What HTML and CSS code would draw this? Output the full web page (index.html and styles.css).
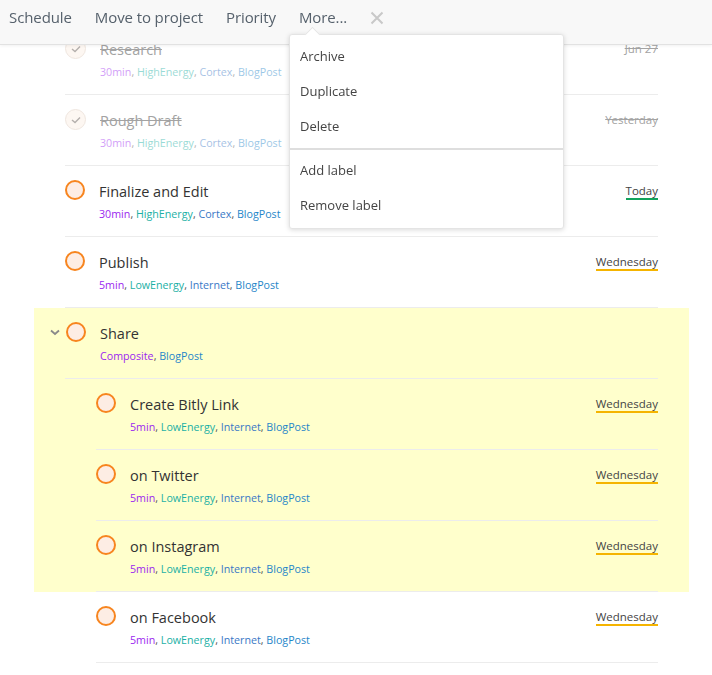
FILE: index.html
```html
<!DOCTYPE html>
<html>
<head>
<meta charset="utf-8">
<link rel="stylesheet" href="styles.css">
</head>
<body>
<div class="toolbar">
  <span class="tb-item">Schedule</span>
  <span class="tb-item">Move to project</span>
  <span class="tb-item">Priority</span>
  <span class="tb-item">More...</span>
  <svg class="tb-close" width="14" height="14" viewBox="0 0 14 14"><path d="M1.5 1.5 L12.5 12.5 M12.5 1.5 L1.5 12.5" stroke="#c9c9c9" stroke-width="2" fill="none"/></svg>
</div>

<div class="menu">
  <div class="menu-item">Archive</div>
  <div class="menu-item">Duplicate</div>
  <div class="menu-item">Delete</div>
  <div class="menu-sep"></div>
  <div class="menu-item">Add label</div>
  <div class="menu-item">Remove label</div>
</div>

<div class="list">
  <div class="row done">
    <div class="row-inner">
      <span class="check"><svg width="10" height="8" viewBox="0 0 10 8"><path d="M1 4 L4 6.5 L9 1.5" stroke="#b5b0ad" stroke-width="1.4" fill="none"/></svg></span>
      <div class="body">
        <div class="title">Research</div>
        <div class="tags"><span class="t-time">30min</span>, <span class="t-energy">HighEnergy</span>, <span class="t-ctx">Cortex</span>, <span class="t-proj">BlogPost</span></div>
      </div>
      <span class="date">Jun 27</span>
    </div>
  </div>
  <div class="row done">
    <div class="row-inner">
      <span class="check"><svg width="10" height="8" viewBox="0 0 10 8"><path d="M1 4 L4 6.5 L9 1.5" stroke="#b5b0ad" stroke-width="1.4" fill="none"/></svg></span>
      <div class="body">
        <div class="title">Rough Draft</div>
        <div class="tags"><span class="t-time">30min</span>, <span class="t-energy">HighEnergy</span>, <span class="t-ctx">Cortex</span>, <span class="t-proj">BlogPost</span></div>
      </div>
      <span class="date">Yesterday</span>
    </div>
  </div>
  <div class="row">
    <div class="row-inner">
      <span class="circle"></span>
      <div class="body">
        <div class="title">Finalize and Edit</div>
        <div class="tags"><span class="t-time">30min</span>, <span class="t-energy">HighEnergy</span>, <span class="t-ctx">Cortex</span>, <span class="t-proj">BlogPost</span></div>
      </div>
      <span class="date today">Today</span>
    </div>
  </div>
  <div class="row">
    <div class="row-inner">
      <span class="circle"></span>
      <div class="body">
        <div class="title">Publish</div>
        <div class="tags"><span class="t-time">5min</span>, <span class="t-energy">LowEnergy</span>, <span class="t-ctx">Internet</span>, <span class="t-proj">BlogPost</span></div>
      </div>
      <span class="date soon">Wednesday</span>
    </div>
  </div>
  <div class="row selected">
    <div class="row-inner">
      <svg class="chev" width="10" height="7" viewBox="0 0 10 7"><path d="M1 1.5 L5 5 L9 1.5" stroke="#8a8a8a" stroke-width="1.8" fill="none"/></svg>
      <span class="circle"></span>
      <div class="body">
        <div class="title">Share</div>
        <div class="tags"><span class="t-time">Composite</span>, <span class="t-proj">BlogPost</span></div>
      </div>
    </div>
  </div>
  <div class="row sub selected">
    <div class="row-inner">
      <span class="circle"></span>
      <div class="body">
        <div class="title">Create Bitly Link</div>
        <div class="tags"><span class="t-time">5min</span>, <span class="t-energy">LowEnergy</span>, <span class="t-ctx">Internet</span>, <span class="t-proj">BlogPost</span></div>
      </div>
      <span class="date soon">Wednesday</span>
    </div>
  </div>
  <div class="row sub selected">
    <div class="row-inner">
      <span class="circle"></span>
      <div class="body">
        <div class="title">on Twitter</div>
        <div class="tags"><span class="t-time">5min</span>, <span class="t-energy">LowEnergy</span>, <span class="t-ctx">Internet</span>, <span class="t-proj">BlogPost</span></div>
      </div>
      <span class="date soon">Wednesday</span>
    </div>
  </div>
  <div class="row sub selected">
    <div class="row-inner">
      <span class="circle"></span>
      <div class="body">
        <div class="title">on Instagram</div>
        <div class="tags"><span class="t-time">5min</span>, <span class="t-energy">LowEnergy</span>, <span class="t-ctx">Internet</span>, <span class="t-proj">BlogPost</span></div>
      </div>
      <span class="date soon">Wednesday</span>
    </div>
  </div>
  <div class="row sub">
    <div class="row-inner">
      <span class="circle"></span>
      <div class="body">
        <div class="title">on Facebook</div>
        <div class="tags"><span class="t-time">5min</span>, <span class="t-energy">LowEnergy</span>, <span class="t-ctx">Internet</span>, <span class="t-proj">BlogPost</span></div>
      </div>
      <span class="date soon">Wednesday</span>
    </div>
  </div>
</div>
</body>
</html>
```

FILE: styles.css
```css
html, body {
  margin: 0;
  padding: 0;
  background: #ffffff;
  font-family: "Open Sans", "Noto Sans", "Liberation Sans", sans-serif;
  color: #333;
}

.toolbar {
  position: fixed;
  top: 0;
  left: 0;
  right: 0;
  height: 45px;
  box-sizing: border-box;
  padding: 6px 0 0 9px;
  background: #f8f8f8;
  border-bottom: 1px solid #e2e2e2;
  box-shadow: 0 1px 3px rgba(0,0,0,0.06);
  display: flex;
  align-items: flex-start;
  gap: 23px;
  z-index: 2;
}

.tb-item {
  font-size: 15px;
  line-height: 22px;
  color: #56616c;
  letter-spacing: -0.1px;
}

.tb-close {
  margin-top: 5px;
  margin-left: 0;
}

.menu {
  position: absolute;
  top: 34px;
  left: 289px;
  width: 275px;
  box-sizing: border-box;
  padding: 4px 0 5px;
  background: #fff;
  border-radius: 3px;
  border: 1px solid #e4e4e4;
  box-shadow: 0 1px 5px rgba(0,0,0,0.15);
  z-index: 3;
}

.menu::before {
  content: "";
  position: absolute;
  top: -6px;
  left: 17px;
  width: 10px;
  height: 10px;
  background: #fff;
  border-left: 1px solid #e6e6e6;
  border-top: 1px solid #e6e6e6;
  transform: rotate(45deg);
}

.menu-item {
  height: 35px;
  line-height: 35px;
  padding-left: 10px;
  font-size: 13px;
  color: #444;
}

.menu-sep {
  height: 2px;
  background: #dedede;
  margin: 4px 0 3px;
}

.list {
  margin: 24px 0 0 34px;
  width: 655px;
}

.row {
  padding: 0 31px;
}

.row.selected {
  background: #ffffcc;
}

.row-inner {
  display: flex;
  align-items: flex-start;
  height: 70px;
  border-bottom: 1px solid #ececec;
}

.row.sub .row-inner {
  margin-left: 31px;
}

.circle {
  flex: none;
  width: 16px;
  height: 16px;
  margin-top: 14px;
  border: 2px solid #f7851f;
  border-radius: 50%;
  background: #fdede4;
}

.check {
  flex: none;
  width: 19px;
  height: 19px;
  margin-top: 14px;
  border: 1px solid #efe6df;
  border-radius: 50%;
  background: #fdf7f2;
  display: flex;
  align-items: center;
  justify-content: center;
}

.chev {
  flex: none;
  margin: 21px 6px 0 -15px;
}

.body {
  flex: 1;
  margin-left: 14px;
  padding-top: 16px;
}

.title {
  font-size: 14.5px;
  line-height: 20px;
  color: #333;
}

.tags {
  margin-top: 4px;
  font-size: 10.7px;
  line-height: 16px;
  color: #555;
}

.t-time { color: #9b1ff0; }
.t-energy { color: #1bb0a5; }
.t-ctx { color: #3a78c6; }
.t-proj { color: #1f86c9; }

.date {
  flex: none;
  margin-top: 17px;
  font-size: 11.5px;
  line-height: 15px;
  color: #444;
  border-bottom: 2px solid transparent;
}

.date.today { border-bottom-color: #13a35c; }
.date.soon { border-bottom-color: #f5b400; }

.row.done .title,
.row.done .date {
  color: #a3a3a3;
  text-decoration: line-through;
}

.row.done .tags {
  opacity: 0.45;
}
```
